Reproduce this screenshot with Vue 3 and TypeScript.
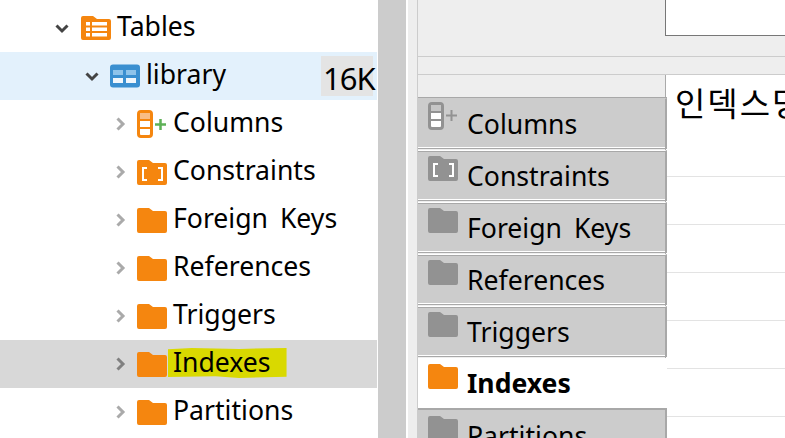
<script setup lang="ts">
type Kind = 'folder' | 'columns' | 'constraints' | 'tables' | 'library'
interface Row { label: string; kind: Kind; depth: number; open?: boolean; cls?: string; size?: string }

const tree: Row[] = [
  { label: 'Tables', kind: 'tables', depth: 0, open: true },
  { label: 'library', kind: 'library', depth: 1, open: true, cls: 'sel', size: '16K' },
  { label: 'Columns', kind: 'columns', depth: 2 },
  { label: 'Constraints', kind: 'constraints', depth: 2 },
  { label: 'Foreign Keys', kind: 'folder', depth: 2 },
  { label: 'References', kind: 'folder', depth: 2 },
  { label: 'Triggers', kind: 'folder', depth: 2 },
  { label: 'Indexes', kind: 'folder', depth: 2, cls: 'hover' },
  { label: 'Partitions', kind: 'folder', depth: 2 },
]
const tabs = tree.slice(2)
const dataRows = 8
</script>

<template>
  <div class="root">
    <div class="tree">
      <div
        v-for="r in tree"
        :key="r.label"
        class="row"
        :class="[r.cls, 'd' + r.depth]"
      >
        <svg class="chev" :class="{ open: r.open }" width="16" height="16" viewBox="0 0 16 16">
          <path v-if="r.open" d="M2.5 5.5 L8 11 L13.5 5.5" />
          <path v-else d="M5.5 2.5 L11 8 L5.500 13.500" />
        </svg>
        <span class="ic">
          <svg v-if="r.kind === 'tables'" width="30" height="24" viewBox="0 0 30 24">
            <path class="o" d="M0 2Q0 0 2 0H12L16 3H28Q30 3 30 5V22Q30 24 28 24H2Q0 24 0 22Z" />
            <path fill="#fff" d="M5 6H9V9.500H5ZM11 6H26V9.500H11ZM5 11.500H9V15H5ZM11 11.500H26V15H11ZM5 17H9V20.500H5ZM11 17H26V20.500H11Z" />
          </svg>
          <svg v-else-if="r.kind === 'library'" width="30" height="24" viewBox="0 0 30 24">
            <rect x="0" y="0.500" width="30" height="23" rx="3" fill="#3a8fd0" />
            <path fill="#8ec3ea" d="M3 6H13V11H3ZM16 6H26V11H16Z" />
            <path fill="#f1f7fc" d="M3 14H13V19H3ZM16 14H26V19H16Z" />
          </svg>
          <svg v-else-if="r.kind === 'columns'" width="30" height="28" viewBox="0 0 30 28">
            <rect x="1.500" y="1.500" width="13" height="25" rx="2.500" fill="#fff" stroke="#f5860f" stroke-width="3" />
            <path fill="#f9bd86" d="M3 3H13V9H3Z" />
            <path stroke="#f5860f" stroke-width="2" d="M2 10H14M2 18H14" />
            <path stroke="#5eb157" stroke-width="2.500" d="M18 14.500H29M23.500 9V20" />
          </svg>
          <svg v-else-if="r.kind === 'constraints'" width="30" height="25" viewBox="0 0 30 25">
            <path class="o" d="M0 2Q0 0 2 0H12L16 3H28Q30 3 30 5V23Q30 25 28 25H2Q0 25 0 23Z" />
            <path fill="none" stroke="#fff" stroke-width="2" d="M10 8H6V20H10M21 8H25V20H21" />
          </svg>
          <svg v-else width="30" height="25" viewBox="0 0 30 25">
            <path class="o" d="M0 2Q0 0 2 0H12L16 3H28Q30 3 30 5V23Q30 25 28 25H2Q0 25 0 23Z" />
          </svg>
        </span>
        <span class="lb" :class="{ mark: r.cls === 'hover' }">{{ r.label }}</span>
        <span v-if="r.size" class="size">{{ r.size }}</span>
      </div>
    </div>

    <div class="splitter"></div>
    <div class="strip"></div>

    <div class="main">
      <div class="top">
        <div class="box"></div>
      </div>
      <div class="band"></div>
      <div class="body">
        <div class="tabs">
          <div
            v-for="t in tabs"
            :key="t.label"
            class="tab"
            :class="{ active: t.label === 'Indexes' }"
          >
            <svg v-if="t.kind === 'columns'" class="tic" width="30" height="28" viewBox="0 0 30 28">
              <rect x="1.500" y="1.500" width="13" height="25" rx="2.500" fill="#fff" stroke="#929292" stroke-width="3" />
              <path fill="#c6c6c6" d="M3 3H13V9H3Z" />
              <path stroke="#929292" stroke-width="2" d="M2 10H14M2 18H14" />
              <path stroke="#929292" stroke-width="2" d="M18 13.500H29M23.500 8V19" />
            </svg>
            <svg v-else-if="t.kind === 'constraints'" class="tic" width="30" height="25" viewBox="0 0 30 25">
              <path class="g" d="M0 2Q0 0 2 0H12L16 3H28Q30 3 30 5V23Q30 25 28 25H2Q0 25 0 23Z" />
              <path fill="none" stroke="#fff" stroke-width="2" d="M10 8H6V20H10M21 8H25V20H21" />
            </svg>
            <svg v-else class="tic" width="30" height="25" viewBox="0 0 30 25">
              <path :class="t.label === 'Indexes' ? 'o' : 'g'" d="M0 2Q0 0 2 0H12L16 3H28Q30 3 30 5V23Q30 25 28 25H2Q0 25 0 23Z" />
            </svg>
            <span class="tlb">{{ t.label }}</span>
          </div>
        </div>
        <div class="grid">
          <div class="cell head">인덱스명</div>
          <div v-for="n in dataRows" :key="n" class="cell"></div>
        </div>
      </div>
    </div>
  </div>
</template>

<style scoped>
.root {
  width: 785px;
  height: 438px;
  overflow: hidden;
  display: flex;
  background: #fff;
  font-family: "Noto Sans", "Noto Sans CJK KR", sans-serif;
  font-size: 26.6px;
  word-spacing: 5px;
  color: #000;
}
.tree {
  width: 378px;
  flex: none;
  padding-top: 4px;
  box-sizing: border-box;
}
.row {
  height: 48px;
  display: flex;
  align-items: center;
  box-sizing: border-box;
  position: relative;
}
.d0 { padding-left: 54px; }
.d1 { padding-left: 84px; }
.d2 { padding-left: 112px; }
.sel { background: #e3f1fc; width: 377px; }
.hover { background: #d8d8d8; width: 377px; }
.chev {
  flex: none;
  width: 16px;
  height: 16px;
  margin-right: 11px;
  fill: none;
  stroke: #aaa;
  stroke-width: 3;
}
.chev.open { stroke: #444; }
.d1 .chev { margin-right: 10px; }
.d2 .chev { margin-right: 9px; }
.hover .chev { stroke: #808080; }
.ic {
  flex: none;
  width: 30px;
  display: flex;
  margin-right: 6px;
}
.o { fill: #f5860f; }
.g { fill: #929292; }
.lb {
  position: relative;
  line-height: 44px;
  margin-bottom: 4px;
  white-space: nowrap;
  z-index: 0;
}
.mark::before {
  content: "";
  position: absolute;
  z-index: -1;
  left: -5px;
  right: -16px;
  top: 8px;
  height: 30px;
  background: #d9d900;
  clip-path: polygon(0 4%, 20% 0, 60% 3%, 100% 0, 100% 96%, 60% 100%, 40% 94%, 0 97%);
}
.size {
  margin-left: auto;
  margin-right: 4px;
  width: 52px;
  height: 40px;
  line-height: 44px;
  background: #e4e4e4;
  padding-left: 2px;
  font-size: 31px;
  letter-spacing: -1px;
  box-sizing: border-box;
  white-space: nowrap;
}
.splitter {
  width: 28px;
  flex: none;
  background: #ccc;
}
.strip {
  width: 12px;
  flex: none;
  box-sizing: border-box;
  background: #eee;
  border-left: 2px solid #fff;
  border-right: 1px solid #ccc;
}
.main {
  flex: 1;
  min-width: 0;
  display: flex;
  flex-direction: column;
  background: #eee;
}
.top {
  height: 57px;
  flex: none;
  box-sizing: border-box;
  border-bottom: 1px solid #ccc;
  padding-left: 247px;
}
.box {
  height: 36px;
  box-sizing: border-box;
  background: #fff;
  border-left: 1px solid #777;
  border-bottom: 1px solid #777;
}
.band {
  height: 18px;
  flex: none;
  box-sizing: border-box;
  border-bottom: 1px solid #ccc;
}
.body {
  flex: 1;
  min-height: 0;
  display: flex;
}
.tabs {
  width: 247px;
  flex: none;
  padding-top: 23px;
  box-sizing: border-box;
  position: relative;
  z-index: 1;
}
.tab {
  width: 249px;
  height: 51px;
  margin-bottom: 1px;
  box-sizing: border-box;
  position: relative;
  background: #ccc;
  border-top: 1px solid #fff;
  border-bottom: 1px solid #a8a8a8;
  border-right: 2px solid #a8a8a8;
  box-shadow: inset 0 1px 0 #a8a8a8, inset 0 -1px 0 #fff;
}
.tab:first-child {
  border-top-color: #ccc;
  box-shadow: 0 -1px 0 #a8a8a8, inset 0 -1px 0 #fff;
}
.tab.active {
  height: 50px;
  margin-bottom: 0;
  background: #fff;
  border: 0;
  box-shadow: none;
}
.tab:last-child {
  border-top: 2px solid #a8a8a8;
  box-shadow: none;
}
.tic {
  position: absolute;
  left: 10px;
  top: 5px;
}
.tab:first-child .tic { top: 3px; }
.tab.active .tic { top: 6px; }
.tab:last-child .tic { top: 6px; }
.tlb {
  position: absolute;
  left: 49px;
  top: 3px;
  line-height: 44px;
  white-space: nowrap;
}
.tab.active .tlb { font-weight: 700; top: 3px; }
.tab:last-child .tlb { top: 4px; }
.grid {
  flex: 1;
  min-width: 0;
  background: #fff;
  border-left: 1px solid #aaa;
}
.cell {
  height: 48px;
  box-sizing: border-box;
  border-bottom: 1px solid #e3e3e3;
}
.head {
  height: 102px;
  padding: 4px 0 0 9px;
  line-height: 50px;
  font-size: 33px;
  letter-spacing: 2px;
  white-space: nowrap;
  overflow: hidden;
}
</style>
